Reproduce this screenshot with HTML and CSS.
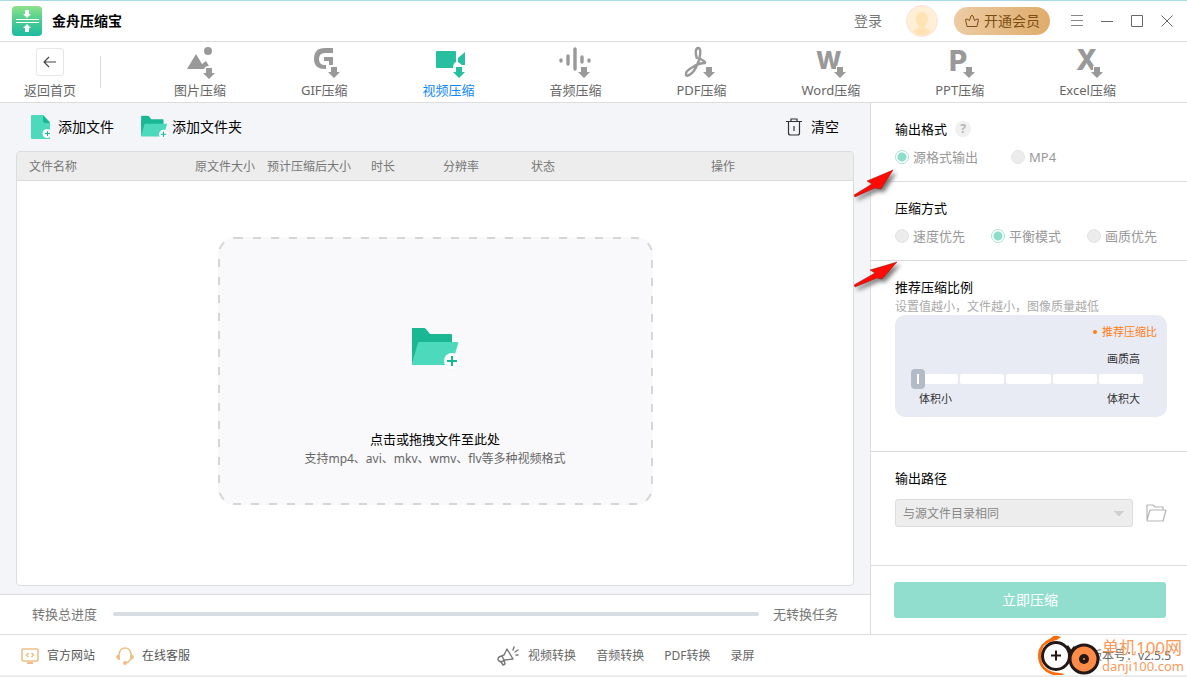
FILE: index.html
```html
<!DOCTYPE html>
<html lang="zh-CN">
<head>
<meta charset="utf-8">
<title>金舟压缩宝</title>
<link rel="stylesheet" href="styles.css">
</head>
<body>
<svg class="defs" width="0" height="0" aria-hidden="true">
  <defs>
    <symbol id="down" viewBox="0 0 12 12"><path d="M3 1h6v5h3L6 12 0 6h3z"/></symbol>
    <symbol id="folder-add" viewBox="0 0 50 42">
      <path fill="#1ab795" d="M2 1h12q1 0 2 1l4 5h21q1 0 1 1v12H2z"/>
      <path fill="#1ab795" d="M2 10h12v26H2z"/>
      <path fill="#4dd9bb" d="M9 15h38q2 0 1 2l-6 20q0 1-2 1H3q-2 0-1-2l6-20q0-1 1-1z"/>
      <circle cx="42" cy="34" r="8" fill="#fff"/>
      <path stroke="#1ab795" stroke-width="2" d="M42 29v10M37 34h10"/>
    </symbol>
  </defs>
</svg>

<header class="titlebar">
  <div class="brand">
    <svg width="30" height="30" viewBox="0 0 30 30">
      <defs><linearGradient id="lg" x1="0" y1="0" x2="0" y2="1"><stop offset="0" stop-color="#8fe28a"/><stop offset=".45" stop-color="#4fce8f"/><stop offset="1" stop-color="#1dbba2"/></linearGradient></defs>
      <rect width="30" height="30" rx="4" fill="url(#lg)"/>
      <path fill="#fff" d="M13 4h4v4h2l-4 4-4-4h2zM13 26h4v-4h2l-4-4-4 4h2z"/>
      <path stroke="#fff" d="M4 13.500h23M4 16.500h23"/>
    </svg>
    <h1>金舟压缩宝</h1>
  </div>
  <a class="login" href="#">登录</a>
  <svg class="avatar" width="32" height="32" viewBox="0 0 32 32">
    <circle cx="16" cy="16" r="15.500" fill="#ffefd6" stroke="#fde3dd"/>
    <path fill="#ffe3b5" d="M16 7c4 0 6 3 6 7 0 3-1 5-3 7v2l6 3c-4 6-14 6-18 0l6-3v-2c-2-2-3-4-3-7 0-4 2-7 6-7z"/>
  </svg>
  <button class="vip">
    <svg width="16" height="16" viewBox="0 0 16 16"><path fill="none" stroke="#7d4e12" stroke-linejoin="round" d="M3 13.500 1.500 6.500 3 6l2.500 1.500L7 3q1-1.500 2 0l1.500 4.500L13 6l1.500.5-1.500 7z"/></svg>
    开通会员
  </button>
  <div class="window-tools">
    <button aria-label="菜单"><svg width="12" height="12" viewBox="0 0 12 12"><path stroke="#888" d="M0 .5h12M0 5.500h12M0 10.500h12"/></svg></button>
    <button aria-label="最小化"><svg width="12" height="12" viewBox="0 0 12 12"><path stroke="#666" d="M0 6.500h12"/></svg></button>
    <button aria-label="最大化"><svg width="12" height="12" viewBox="0 0 12 12"><path fill="none" stroke="#666" d="M.5.5h11v11H.5z"/></svg></button>
    <button aria-label="关闭"><svg width="12" height="12" viewBox="0 0 12 12"><path stroke="#666" d="m.5.5 11 11m0-11-11 11"/></svg></button>
  </div>
</header>

<nav class="nav">
  <a class="back" href="#">
    <span class="back-box"><svg width="14" height="12" viewBox="0 0 14 12"><path fill="none" stroke="#444" stroke-width="1.200" d="M13 6H1m5-5L1 6l5 5"/></svg></span>
    返回首页
  </a>
  <div class="tabs">
    <a class="tab" href="#"><svg width="32" height="32" viewBox="0 0 32 32"><path d="M3 22 12 7l6 10 4-3 3 5q-4 0-5 3z"/><circle cx="24" cy="4" r="4"/><use href="#down" x="19" y="20" width="12" height="12"/></svg>图片压缩</a>
    <a class="tab" href="#"><svg width="32" height="32" viewBox="0 0 32 32"><path d="M25 1v5h-8q-6 0-6 6t6 6h1v4h-1Q6 22 6 12 6 1 17 1zM16 10h9v8h-4v-4h-5z"/><use href="#down" x="20" y="19" width="12" height="12"/></svg>GIF压缩</a>
    <a class="tab active" href="#"><svg width="32" height="32" viewBox="0 0 32 32"><path d="M4 4h18q1 0 1 1v10q-3 1-3 6H4q-1 0-1-1V5q0-1 1-1zM25 11l7-6v13h-3l-4-3z"/><use href="#down" x="20" y="19" width="12" height="12"/></svg>视频压缩</a>
    <a class="tab" href="#"><svg width="32" height="32" viewBox="0 0 32 32"><path fill="none" stroke="#999" stroke-width="3.400" stroke-linecap="round" d="M2 13v1M9 9v8M16 2v20M23 10v5M30 13v1"/><use class="halo" href="#down" x="19" y="19" width="12" height="12"/></svg>音频压缩</a>
    <a class="tab" href="#"><svg width="32" height="32" viewBox="0 0 32 32"><path fill="none" stroke="#999" stroke-width="2.400" d="M12 12q-3-10 1-11 4 0 1 12-3 9-7 13-5 4-6 2-1-4 7-8 6-4 12-4 1-1-3-3-2-1-2-2"/><use href="#down" x="18" y="19" width="12" height="12"/></svg>PDF压缩</a>
    <a class="tab" href="#"><svg width="32" height="32" viewBox="0 0 32 32"><text class="mark" x="1" y="22" font-size="24">W</text><use class="halo" href="#down" x="19" y="19" width="12" height="12"/></svg>Word压缩</a>
    <a class="tab" href="#"><svg width="32" height="32" viewBox="0 0 32 32"><text class="mark" x="5" y="24" font-size="28">P</text><use class="halo" href="#down" x="19" y="19" width="12" height="12"/></svg>PPT压缩</a>
    <a class="tab" href="#"><svg width="32" height="32" viewBox="0 0 32 32"><text class="mark" x="4" y="23" font-size="28">X</text><use class="halo" href="#down" x="19" y="19" width="12" height="12"/></svg>Excel压缩</a>
  </div>
</nav>

<div class="workspace">
  <main class="content">
    <div class="toolbar">
      <button class="tool">
        <svg width="21" height="24" viewBox="0 0 21 24"><path fill="#4dd9bb" d="M1 0h11l7 7v17H1q-1 0-1-1V1q0-1 1-1z"/><path fill="#1ab795" d="m12 0 7 8h-5q-2 0-2-2z"/><circle cx="16" cy="18.500" r="4.500" fill="#fff"/><path stroke="#1ab795" d="M16.500 16v5M14 18.500h5"/></svg>
        添加文件
      </button>
      <button class="tool folder"><svg width="28" height="24" viewBox="0 0 50 42"><use href="#folder-add"/></svg>添加文件夹</button>
      <button class="tool clear">
        <svg width="16" height="18" viewBox="0 0 16 18"><path fill="none" stroke="#333" stroke-width="1.200" d="M0 3.500h16M5 3V1h6v2M2.500 4v11q0 2 2 2h7q2 0 2-2V4M8 8v5"/></svg>
        清空
      </button>
    </div>

    <section class="files">
      <table>
        <colgroup><col class="c-name"><col class="c-size"><col class="c-est"><col class="c-time"><col class="c-res"><col class="c-state"><col></colgroup>
        <thead><tr><th>文件名称</th><th>原文件大小</th><th>预计压缩后大小</th><th>时长</th><th>分辨率</th><th>状态</th><th>操作</th></tr></thead>
      </table>
      <div class="dropzone">
        <svg class="dash" width="100%" height="100%"><rect class="dash-rect" x="1" y="1" rx="16"/></svg>
        <svg width="50" height="42" viewBox="0 0 50 42"><use href="#folder-add"/></svg>
        <p class="drop-title">点击或拖拽文件至此处</p>
        <p class="drop-note">支持mp4、avi、mkv、wmv、flv等多种视频格式</p>
      </div>
    </section>

    <div class="progress-row">
      <label for="total">转换总进度</label>
      <progress id="total" value="0" max="100"></progress>
      <span>无转换任务</span>
    </div>
  </main>

  <aside class="settings">
    <section class="group">
      <h2>输出格式 <button class="help" aria-label="帮助">?</button></h2>
      <div class="options formats">
        <label><input type="radio" name="fmt" checked>源格式输出</label>
        <label><input type="radio" name="fmt">MP4</label>
      </div>
    </section>
    <section class="group">
      <h2>压缩方式</h2>
      <div class="options">
        <label><input type="radio" name="mode">速度优先</label>
        <label><input type="radio" name="mode" checked>平衡模式</label>
        <label><input type="radio" name="mode">画质优先</label>
      </div>
    </section>
    <section class="group ratio">
      <h2><label for="ratio">推荐压缩比例</label></h2>
      <p class="hint">设置值越小，文件越小，图像质量越低</p>
      <div class="ratio-box">
        <p class="recommend">推荐压缩比</p>
        <p class="quality">画质高</p>
        <div class="slider">
          <i></i><i></i><i></i><i></i><i></i>
          <input type="range" id="ratio" min="0" max="5" value="0">
        </div>
        <p class="ends"><span>体积小</span><span>体积大</span></p>
      </div>
    </section>
    <section class="group path">
      <h2><label for="path">输出路径</label></h2>
      <div class="path-row">
        <select id="path"><option>与源文件目录相同</option></select>
        <button class="browse" aria-label="打开文件夹"><svg width="21" height="18" viewBox="0 0 21 18"><path fill="none" stroke="#b5b5b5" stroke-width="1.200" stroke-linejoin="round" d="M1 16V1h6l2 2h8v3M1 16 4 6h16l-3 11H2q-1 0-1-1z"/></svg></button>
      </div>
    </section>
    <div class="submit"><button>立即压缩</button></div>
  </aside>
</div>

<footer class="footer">
  <div class="links">
    <a href="#"><svg width="18" height="16" viewBox="0 0 18 16"><path fill="none" stroke="#ecc088" stroke-width="1.600" d="M2 1h14q1 0 1 1v10q0 1-1 1H2q-1 0-1-1V2q0-1 1-1zM7.500 5 5.500 7l2 2M10.500 5l2 2-2 2"/><path fill="#ecc088" d="M6 14h6v2H6z"/></svg>官方网站</a>
    <a href="#"><svg width="18" height="18" viewBox="0 0 18 18"><path fill="none" stroke="#ecc088" stroke-width="1.600" d="M3 9V7q1-6 6-6t6 6v3q0 4-5 6"/><path fill="#ecc088" d="M1 8q2-1 3 1v4q-3 0-4-3zM17 8q-2-1-3 1v4q3 0 4-3z"/><circle cx="9" cy="16" r="2" fill="#ecc088"/></svg>在线客服</a>
  </div>
  <div class="more">
    <svg width="22" height="20" viewBox="0 0 22 20"><path fill="none" stroke="#777" stroke-width="1.400" stroke-linejoin="round" stroke-linecap="round" d="M10 3 7 9l-5 2q-2 2 0 4l2 1 4-2 8-1zM4 16l2 3 2-1-1-4M5 10l2 4M16 4l1-3M18 6l3-2M19 9h2"/></svg>
    <a href="#">视频转换</a><a href="#">音频转换</a><a href="#">PDF转换</a><a href="#">录屏</a>
  </div>
  <span class="version">版本号：v2.5.5</span>
  <div class="watermark">
    <svg width="66" height="42" viewBox="0 0 66 42">
      <path fill="#ff6c0a" d="M25 2 22 1Q17 0 15 3 2 9 2 20q0 15 15 20 8 3 11-1l-4-1Q5 37 5 20 6 8 17 6q5-1 8-4z"/>
      <circle cx="20" cy="21" r="13.500" fill="#fff" stroke="#231815" stroke-width="3"/>
      <path stroke="#231815" stroke-width="2" d="M15 20.500h10M20 15.500v10"/>
      <path fill="none" stroke="#231815" stroke-width="3" d="m31 11 4 6 4-5"/>
      <circle cx="48" cy="24" r="14" fill="#ff8b47" stroke="#231815" stroke-width="3"/>
      <circle cx="48" cy="24" r="5" fill="#231815"/><circle cx="48" cy="24" r="1" fill="#ff8b47"/>
    </svg>
    <div><strong>单机100网</strong><small>danji100.com</small></div>
  </div>
</footer>

<svg class="arrow first" width="46" height="34" viewBox="0 0 46 34"><path fill="#ff0a05" stroke="#8f1a14" stroke-width=".5" d="M40 2 14 13l5 3L1 27l1 2 20-9 6 1z"/></svg>
<svg class="arrow second" width="46" height="34" viewBox="0 0 46 34"><path fill="#ff0a05" stroke="#8f1a14" stroke-width=".5" d="M44 2 17 10l5 3L1 25l1 2 22-9 5 1z"/></svg>
</body>
</html>
```

FILE: styles.css
```css
* { box-sizing: border-box; }
body {
  margin: 0;
  min-height: 100vh;
  display: flex;
  flex-direction: column;
  position: relative;
  background: #fff;
  border-bottom: 2px solid #ececec;
  color: #666;
  font: 13px/20px "Noto Sans", "Noto Sans CJK SC", sans-serif;
}
h1, h2, p { margin: 0; font-weight: 400; }
a { color: inherit; text-decoration: none; }
button, select { font: inherit; color: inherit; border: 0; padding: 0; background: none; }
svg { display: block; flex: none; overflow: visible; }
.defs { position: absolute; }

.titlebar {
  display: flex;
  align-items: center;
  height: 42px;
  padding: 0 14px 0 12px;
  border-top: 1px solid #a9d8e6;
  border-bottom: 1px solid #dcdcdc;
}
.brand { display: flex; align-items: center; gap: 10px; flex: 1; }
.brand h1 { font-size: 14px; font-weight: 700; color: #000; }
.login { font-size: 14px; color: #777; margin-right: 24px; }
.avatar { margin-right: 16px; }
.vip {
  display: flex;
  align-items: center;
  justify-content: center;
  gap: 4px;
  width: 96px;
  height: 28px;
  border-radius: 14px;
  background: linear-gradient(90deg, #edcba4, #dfac6b);
  color: #7d4e12;
  font-size: 14px;
}
.window-tools { display: flex; gap: 18px; margin-left: 21px; }

.nav { display: flex; height: 61px; border-bottom: 1px solid #dcdcdc; }
.back { flex: none; width: 100px; text-align: center; padding-top: 6px; }
.back-box {
  display: grid;
  place-items: center;
  width: 28px;
  height: 28px;
  margin: 0 auto 4px;
  border: 1px solid #e6e6e6;
  border-radius: 3px;
}
.tabs {
  position: relative;
  flex: 1;
  display: flex;
  justify-content: space-between;
  padding: 5px 71px 0 74px;
}
.tabs::before {
  content: "";
  position: absolute;
  left: 0;
  top: 14px;
  width: 1px;
  height: 32px;
  background: #dcdcdc;
}
.tab { display: flex; flex-direction: column; align-items: center; gap: 1px; }
.tab svg { fill: #999; }
.tab.active { color: #0f86f5; }
.tab.active svg { fill: #26bf9f; }
.mark { font-family: Inter, "Liberation Sans", sans-serif; font-weight: 800; }
.halo { stroke: #fff; stroke-width: 2px; paint-order: stroke; }

.workspace { flex: 1; display: flex; }
.content { flex: 1; min-width: 0; display: flex; flex-direction: column; background: #f4f5f9; }
.toolbar { display: flex; align-items: center; height: 48px; padding: 0 31px; }
.tool { display: flex; align-items: center; gap: 6px; font-size: 14px; color: #000; }
.tool.folder { margin-left: 26px; gap: 4px; }
.tool.clear { margin-left: auto; gap: 9px; }

.files {
  flex: 1;
  margin: 0 16px 8px;
  border: 1px solid #dcdcdc;
  border-radius: 4px;
  background: #fff;
  overflow: hidden;
}
table { width: 100%; table-layout: fixed; border-spacing: 0; }
th {
  height: 29px;
  padding: 2px 0 0 12px;
  background: #ededed;
  border-bottom: 1px solid #dcdcdc;
  color: #777;
  font-size: 12px;
  font-weight: 400;
  text-align: left;
  white-space: nowrap;
}
.c-name { width: 166px; }
.c-size { width: 72px; }
.c-est { width: 104px; }
.c-time { width: 72px; }
.c-res { width: 88px; }
.c-state { width: 180px; }
.dropzone {
  position: relative;
  display: flex;
  flex-direction: column;
  align-items: center;
  width: 435px;
  margin: 56px auto;
  padding: 90px 0 36px;
  border-radius: 16px;
  background: #f9f9fb;
}
.dash { position: absolute; inset: 0; }
.dash-rect {
  width: calc(100% - 2px);
  height: calc(100% - 2px);
  fill: none;
  stroke: #d6d6d6;
  stroke-width: 2px;
  stroke-dasharray: 8 10;
}
.drop-title { margin-top: 60px; color: #000; }
.drop-note { font-size: 12px; }

.progress-row {
  display: flex;
  align-items: center;
  height: 40px;
  padding: 0 32px 2px;
  background: #fff;
  border-top: 1px solid #dcdcdc;
  color: #777;
}
progress {
  flex: 1;
  height: 4px;
  margin: 0 14px 0 16px;
  appearance: none;
  border: 0;
}
progress::-webkit-progress-bar { background: #d8dde2; border-radius: 2px; }

.settings {
  flex: none;
  width: 317px;
  display: flex;
  flex-direction: column;
  border-left: 1px solid #dcdcdc;
}
.group { padding: 16px 20px 14px 24px; border-bottom: 1px solid #dcdcdc; }
.group h2 { display: flex; align-items: center; gap: 8px; font-size: 13px; color: #000; }
.help {
  width: 16px;
  height: 16px;
  border-radius: 50%;
  background: #f0f0f0;
  color: #b5b5b5;
  font-size: 12px;
  font-weight: 700;
  line-height: 16px;
}
.options { display: flex; gap: 26px; margin-top: 8px; color: #999; }
.options.formats { gap: 33px; }
.options label { display: flex; align-items: center; gap: 4px; white-space: nowrap; }
.options input {
  appearance: none;
  width: 14px;
  height: 14px;
  margin: 0;
  border: 1px solid #e4e4e4;
  border-radius: 50%;
  background: #ececec;
}
.options input:checked {
  border-color: #a9e3d5;
  background: radial-gradient(circle, #8eddcb 4px, #fff 5px);
}
.ratio { padding-bottom: 34px; }
.hint { padding-top: 2px; font-size: 12px; color: #aaa; line-height: 16px; }
.ratio-box {
  height: 102px;
  padding: 7px 10px 0 16px;
  border-radius: 10px;
  background: #e8eaf4;
  color: #333;
  font-size: 11px;
}
.recommend {
  display: flex;
  align-items: center;
  justify-content: flex-end;
  gap: 5px;
  color: #ff7e14;
}
.recommend::before { content: ""; width: 4px; height: 4px; border-radius: 50%; background: currentColor; }
.quality { margin: 7px 17px 0 0; text-align: right; }
.slider { position: relative; display: flex; gap: 2px; height: 20px; padding: 5px 14px 5px 3px; }
.slider i { flex: 1; border-radius: 2px; background: #fff; }
.slider input {
  position: absolute;
  inset: 0;
  width: 100%;
  height: 20px;
  margin: 0;
  appearance: none;
  background: none;
}
.slider input::-webkit-slider-thumb {
  appearance: none;
  width: 14px;
  height: 20px;
  border-radius: 4px;
  background: linear-gradient(#fff, #fff) center / 2px 10px no-repeat #b3bcc6;
}
.ends { display: flex; justify-content: space-between; margin: 0 17px 0 8px; }
.path { padding-bottom: 38px; }
.path-row { display: flex; align-items: center; gap: 13px; margin-top: 11px; }
.path select {
  flex: 1;
  height: 28px;
  padding: 2px 7px 0;
  appearance: none;
  border: 1px solid #dcdcdc;
  border-radius: 3px;
  background: linear-gradient(to bottom left, #d0d0d0 50%, transparent 51%) right 13px center / 5px 5px no-repeat, linear-gradient(to bottom right, #d0d0d0 50%, transparent 51%) right 8px center / 5px 5px no-repeat, #ededed;
  color: #888;
  font-size: 12px;
}
.submit { padding: 16px 21px 16px 23px; }
.submit button {
  width: 100%;
  height: 36px;
  border-radius: 3px;
  background: #92dece;
  color: #fff;
  font-size: 14px;
}

.footer {
  position: relative;
  display: flex;
  align-items: center;
  height: 41px;
  padding: 2px 16px 0 21px;
  border-top: 1px solid #dcdcdc;
  font-size: 12px;
}
.links { flex: 8; display: flex; gap: 21px; }
.links a { display: flex; align-items: center; gap: 8px; color: #555; }
.more { display: flex; align-items: center; gap: 20px; }
.more svg { margin-right: -11px; }
.version { flex: 7; text-align: right; }
.watermark {
  position: absolute;
  right: 3px;
  top: 0;
  display: flex;
  align-items: center;
  color: #f99a5b;
}
.watermark strong { display: block; font-size: 17px; font-weight: 400; }
.watermark small { display: block; font-size: 13px; line-height: 16px; }

.arrow { position: absolute; left: 853px; filter: drop-shadow(3px 3px 2px #777); }
.arrow.first { top: 168px; }
.arrow.second { top: 260px; }
```
